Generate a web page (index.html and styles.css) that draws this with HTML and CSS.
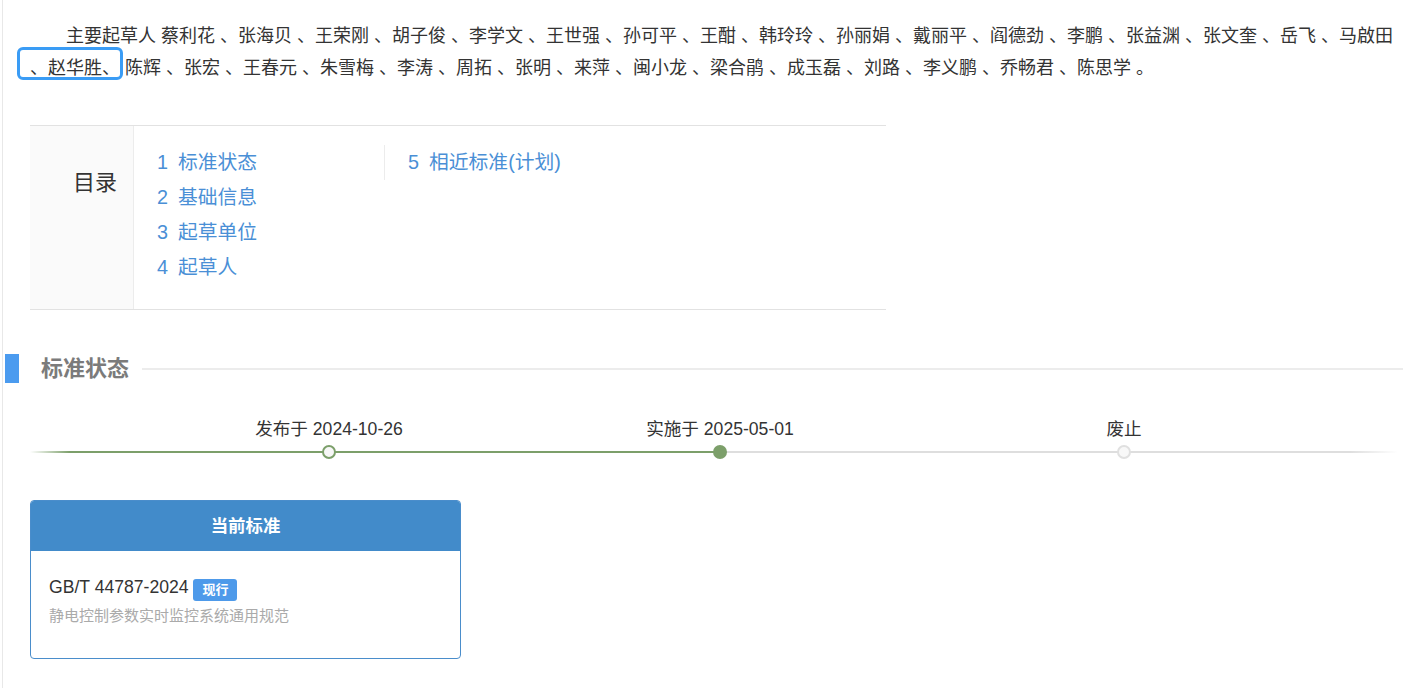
FILE: index.html
```html
<!DOCTYPE html>
<html lang="zh-CN">

<head>
    <meta charset="UTF-8" />
    <title>GB/T 44787-2024</title>
    <link rel="stylesheet" href="styles.css">
</head>

<body>
    <div class="page">
        <p class="drafters">主要起草人 蔡利花 、张海贝 、王荣刚 、胡子俊 、李学文 、王世强 、孙可平 、王酣 、韩玲玲 、孙丽娟 、戴丽平 、阎德劲 、李鹏 、张益渊 、张文奎 、岳飞 、马啟田 <span class="focused">、赵华胜、</span> 陈辉 、张宏 、王春元 、朱雪梅 、李涛 、周拓 、张明 、来萍 、闽小龙 、梁合鹃 、成玉磊 、刘路 、李义鹏 、乔畅君 、陈思学 。</p>

        <div class="toc">
            <div class="toc-title">目录</div>
            <div class="toc-body">
                <ul class="toc-col">
                    <li><a href="#status"><span class="num">1</span>标准状态</a></li>
                    <li><a href="#info"><span class="num">2</span>基础信息</a></li>
                    <li><a href="#units"><span class="num">3</span>起草单位</a></li>
                    <li><a href="#people"><span class="num">4</span>起草人</a></li>
                </ul>
                <ul class="toc-col toc-col-next">
                    <li><a href="#similar"><span class="num">5</span>相近标准(计划)</a></li>
                </ul>
            </div>
        </div>

        <div class="section-head" id="status">
            <span class="section-bar"></span>
            <h3>标准状态</h3>
            <span class="section-line"></span>
        </div>

        <div class="timeline">
            <div class="stop stop-publish">
                <div class="stop-label">发布于 2024-10-26</div>
                <span class="dot dot-done"></span>
            </div>
            <div class="stop stop-implement">
                <div class="stop-label">实施于 2025-05-01</div>
                <span class="dot dot-current"></span>
            </div>
            <div class="stop stop-abolish">
                <div class="stop-label">废止</div>
                <span class="dot dot-todo"></span>
            </div>
        </div>

        <div class="current-card">
            <div class="card-head">当前标准</div>
            <div class="card-body">
                <div class="std-no">GB/T 44787-2024 <span class="badge">现行</span></div>
                <div class="std-name">静电控制参数实时监控系统通用规范</div>
            </div>
        </div>
    </div>
</body>

</html>
```

FILE: styles.css
```css
body {
    margin: 0;
    font-family: "Liberation Sans", "Noto Sans CJK SC", sans-serif;
    color: #333;
    background: #fff;
}

.page {
    margin-left: 2px;
    border-left: 1px solid #e8e8e8;
    min-height: 100vh;
    padding: 20px 22px 0 27px;
    box-sizing: border-box;
}

.drafters {
    margin: 0;
    font-size: 18px;
    line-height: 32px;
    text-indent: 2em;
}

.focused {
    display: inline-block;
    text-indent: 0;
    line-height: 18px;
    padding: 9px 0 0 10px;
    margin: -9px 0 0 -10px;
    outline: 3px solid #3a9cf5;
    border-radius: 3px;
}

/* table of contents */
.toc {
    display: flex;
    width: 856px;
    margin-top: 41px;
    border-top: 1px solid #e2e2e2;
    border-bottom: 1px solid #e2e2e2;
}

.toc-title {
    width: 87px;
    padding: 42px 16px 0 0;
    background: #fafafa;
    border-right: 1px solid #ececec;
    text-align: right;
    font-size: 22px;
    line-height: 30px;
    color: #333;
}

.toc-body {
    display: flex;
    align-items: flex-start;
    padding: 19px 0 24px;
}

.toc-col {
    list-style: none;
    margin: 0;
    padding: 0 0 0 23px;
    width: 227px;
}

.toc-col-next {
    border-left: 1px solid #ececec;
}

.toc-col li {
    font-size: 19.8px;
    line-height: 35px;
    white-space: nowrap;
}

.toc-col a {
    color: #4a8fd6;
    text-decoration: none;
}

.toc-col .num {
    margin-right: 10px;
}

/* section heading */
.section-head {
    display: flex;
    align-items: center;
    margin: 44px 0 0 -25px;
}

.section-bar {
    width: 14px;
    height: 29px;
    background: #4b9bef;
}

.section-head h3 {
    margin: 0 13px 0 22px;
    font-size: 22px;
    line-height: 29px;
    font-weight: bold;
    color: #7b7b7b;
}

.section-line {
    flex: 1;
    height: 2px;
    background: #ececec;
}

/* status timeline */
.timeline {
    display: flex;
    margin-top: 34px;
    padding-left: 199px;
    width: 1368px;
    box-sizing: border-box;
    background-image: linear-gradient(to right,
            rgba(124, 159, 106, 0) 0,
            #7c9f6a 40px,
            #7c9f6a 690px,
            #dedede 690px,
            #dedede 1320px,
            rgba(222, 222, 222, 0) 1368px);
    background-size: 100% 2px;
    background-position: 0 34px;
    background-repeat: no-repeat;
}

.stop {
    width: 200px;
    display: flex;
    flex-direction: column;
    align-items: center;
}

.stop-implement {
    margin-left: 191px;
}

.stop-abolish {
    margin-left: 204px;
}

.stop-label {
    font-size: 17.6px;
    line-height: 24px;
    white-space: nowrap;
}

.dot {
    width: 14px;
    height: 14px;
    margin-top: 4px;
    border-radius: 50%;
    box-sizing: border-box;
}

.dot-done {
    border: 2px solid #7c9f6a;
    background: #f7f7f7;
}

.dot-current {
    background: #7c9f6a;
}

.dot-todo {
    border: 2px solid #e0e0e0;
    background: #f8f8f8;
}

/* current standard card */
.current-card {
    width: 431px;
    margin-top: 41px;
    border: 1px solid #4a8dcb;
    border-radius: 4px;
    box-sizing: border-box;
    overflow: hidden;
}

.card-head {
    height: 50px;
    line-height: 50px;
    background: #428bca;
    color: #fff;
    text-align: center;
    font-size: 17.4px;
    font-weight: bold;
}

.card-body {
    padding: 24px 18px 32px;
}

.std-no {
    font-size: 17.6px;
    line-height: 24px;
}

.badge {
    display: inline-block;
    padding: 0 9px;
    line-height: 22px;
    font-size: 13px;
    font-weight: bold;
    color: #fff;
    background: #4e9aea;
    border-radius: 3px;
    vertical-align: -1px;
}

.std-name {
    margin-top: 5px;
    font-size: 15px;
    line-height: 20px;
    color: #aaa;
}
```
